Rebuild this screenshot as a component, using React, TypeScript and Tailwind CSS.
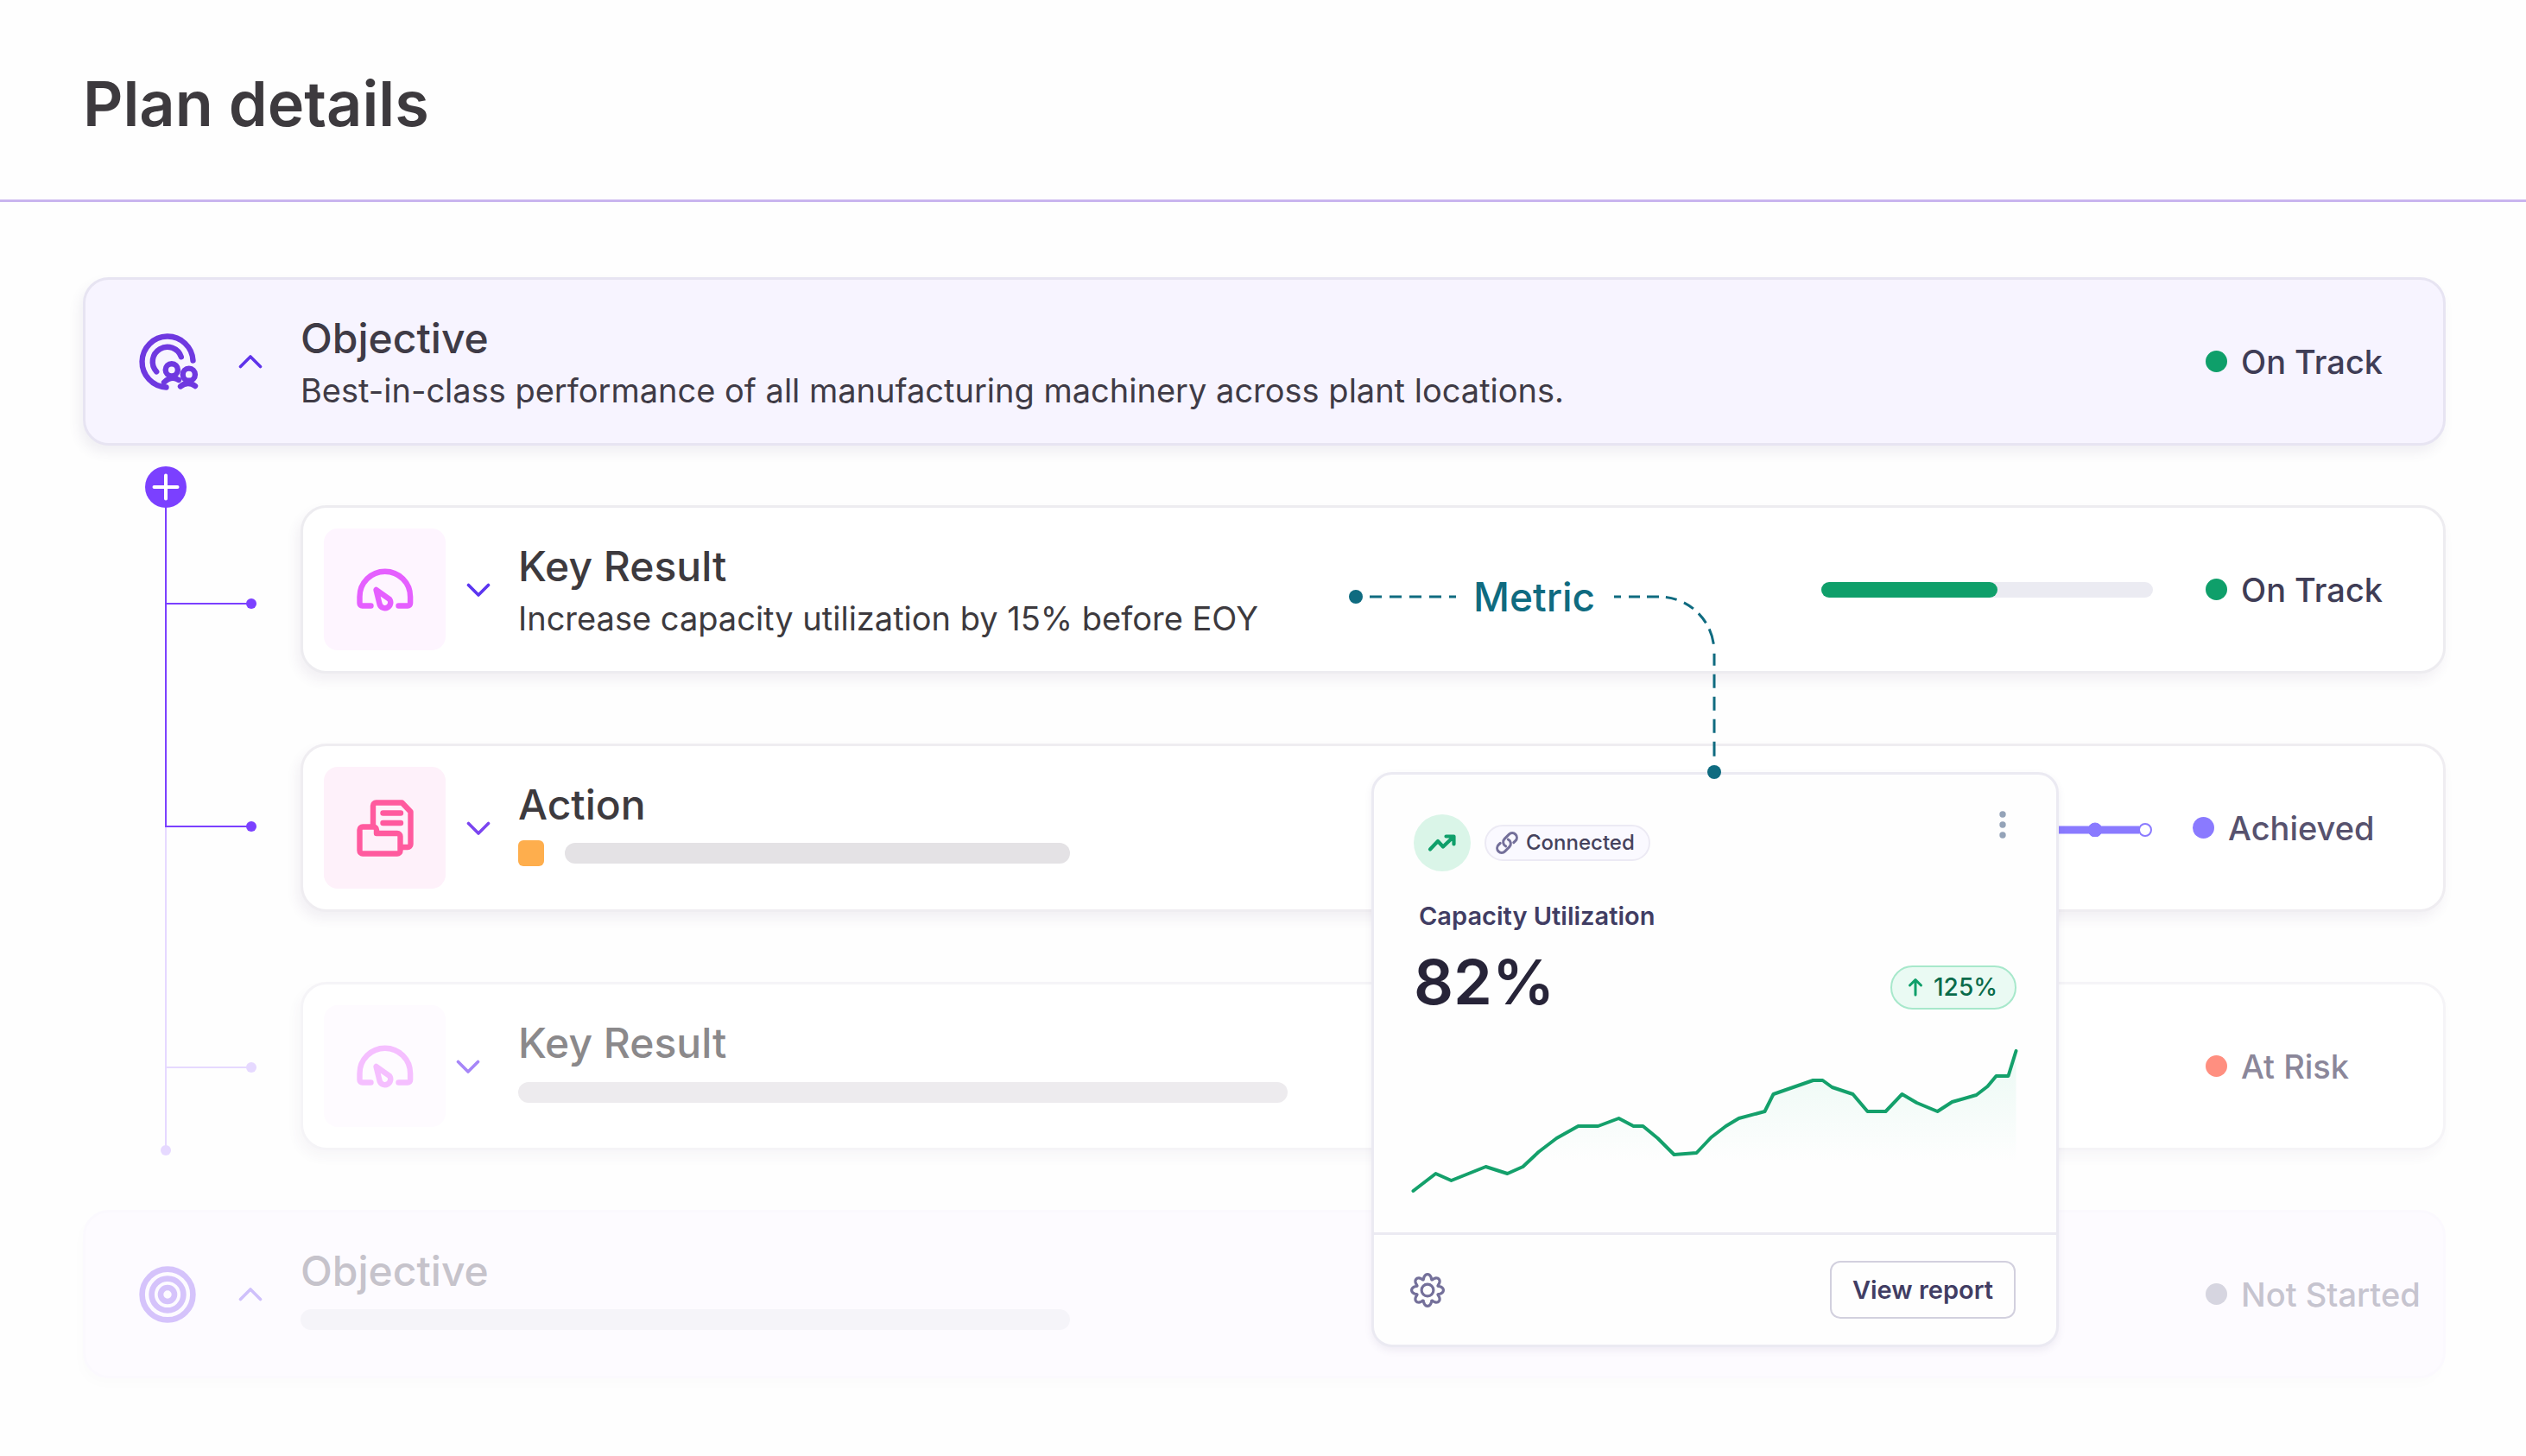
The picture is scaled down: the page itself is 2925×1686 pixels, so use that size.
import type { ReactNode } from "react";

type Shade = { stroke: string };

function ObjectiveIcon({ stroke }: Shade) {
  return (
    <svg viewBox="0 0 78 78" className="size-[78px]" fill="none" stroke={stroke} strokeWidth="6.4" strokeLinecap="round" aria-hidden="true">
      <path d="M37.5 68.5A29.5 29.5 0 1 1 68.5 37.5" />
      <path d="M26.2 50.3A17 17 0 1 1 54.8 33.3" />
      <circle cx="43.8" cy="48.3" r="7.1" />
      <path d="M35 62.7Q43.5 54.5 52 60" />
      <circle cx="63.8" cy="53.7" r="7.1" />
      <path d="M54 67.4Q62.5 60.5 71 67" />
    </svg>
  );
}

function TargetIcon({ stroke }: Shade) {
  return (
    <svg viewBox="0 0 78 78" className="size-[78px]" fill="none" stroke={stroke} strokeWidth="6.6" aria-hidden="true">
      <circle cx="39" cy="39" r="29.4" />
      <circle cx="39" cy="39" r="18.4" />
      <circle cx="39" cy="39" r="8" />
    </svg>
  );
}

function GaugeIcon({ stroke }: Shade) {
  return (
    <svg viewBox="0 0 78 78" className="size-[78px]" fill="none" stroke={stroke} strokeWidth="6.4" strokeLinecap="round" strokeLinejoin="round" aria-hidden="true">
      <path d="M22.5 57.5H12.5a3 3 0 0 1-3-3V47a29.3 29.3 0 0 1 58.6 0v7.5a3 3 0 0 1-3 3H54.5" />
      <path d="M28.5 39L32.7 56A6.5 6.5 0 1 0 44 49.8Z" />
    </svg>
  );
}

function ActionIcon({ stroke }: Shade) {
  return (
    <svg viewBox="0 0 78 78" className="size-[78px]" fill="none" stroke={stroke} strokeWidth="6.4" strokeLinecap="round" strokeLinejoin="round" aria-hidden="true">
      <path d="M25 36V13a3.5 3.5 0 0 1 3.5-3.5H58.5L68.5 20V57.5a3.5 3.5 0 0 1-3.5 3.5H59" />
      <path d="M36.5 21.5H57M36.5 33H57" />
      <path d="M13 37.5H25.5a3.5 3.5 0 0 1 3.5 3.5V45H53a3.5 3.5 0 0 1 3.5 3.5V65a3.5 3.5 0 0 1-3.5 3.5H13a3.5 3.5 0 0 1-3.5-3.5V41a3.5 3.5 0 0 1 3.5-3.5Z" />
    </svg>
  );
}

// Outline of an eight-lobed cog around the centre of a 42 unit box.
const cogPoints = Array.from({ length: 160 }, (_, i) => {
  const t = (i / 160) * Math.PI * 2;
  const radius = 15.7 + 2.7 * Math.cos(8 * t);
  const angle = t + 0.06 * Math.sin(8 * t);
  return `${(21 + radius * Math.sin(angle)).toFixed(2)},${(21 - radius * Math.cos(angle)).toFixed(2)}`;
}).join(" ");

function GearIcon() {
  return (
    <svg viewBox="0 0 42 42" className="size-[42px]" fill="none" stroke="#74709a" strokeWidth="3.2" strokeLinejoin="round" aria-hidden="true">
      <polygon points={cogPoints} />
      <circle cx="21" cy="21" r="6.9" />
    </svg>
  );
}

function Chevron({ up, stroke }: { up?: boolean; stroke: string }) {
  return (
    <svg viewBox="0 0 28 16" className="h-4 w-7" fill="none" stroke={stroke} strokeWidth="3.6" strokeLinecap="round" strokeLinejoin="round" aria-hidden="true">
      <path d={up ? "M2.5 13.5L14 2L25.5 13.5" : "M2.5 2.5L14 14L25.5 2.5"} />
    </svg>
  );
}

function Status({ label, dot, text, width }: { label: string; dot: string; text: string; width: string }) {
  return (
    <div className={`flex shrink-0 items-center gap-4 ${width}`}>
      <span className={`size-[25px] shrink-0 rounded-full ${dot}`} />
      <span className={`text-[38px] leading-[48px] font-medium whitespace-nowrap ${text}`}>{label}</span>
    </div>
  );
}

type RowProps = {
  title: string;
  titleColor: string;
  frame: string;
  tile?: string;
  icon: ReactNode;
  chevron: ReactNode;
  expanded?: boolean;
  chevronInset: string;
  children: ReactNode;
  aside: ReactNode;
};

function Row({ title, titleColor, frame, tile = "", icon, chevron, expanded = false, chevronInset, children, aside }: RowProps) {
  return (
    <article className={`flex h-[195px] items-center rounded-[30px] border-[3px] pl-6 ${frame}`}>
      <div className={`flex size-[141px] shrink-0 items-center justify-center rounded-2xl ${tile}`}>{icon}</div>
      <button type="button" aria-label={`Toggle ${title}`} aria-expanded={expanded} className={`flex h-16 w-[84px] shrink-0 items-center ${chevronInset}`}>
        {chevron}
      </button>
      <div className="min-w-0 flex-1 self-start pt-[38px]">
        <h2 className={`text-5xl leading-[60px] font-medium ${titleColor}`}>{title}</h2>
        {children}
      </div>
      {aside}
    </article>
  );
}

function Bar({ className }: { className: string }) {
  return <span className={`h-6 rounded-full ${className}`} />;
}

function Tree() {
  return (
    <svg viewBox="-1 0 252 885" className="h-[885px] w-[252px] shrink-0" fill="none" aria-hidden="true">
      <g stroke="#e6d9ff" strokeWidth="2">
        <path d="M95 441V816M95 720H194" />
      </g>
      <g fill="#e6d9ff">
        <circle cx="95" cy="816" r="6" />
        <circle cx="194" cy="720" r="6" />
      </g>
      <g stroke="#7b40ff" strokeWidth="2">
        <path d="M95 60V441H194M95 183H194" />
      </g>
      <g fill="#7b40ff">
        <circle cx="194" cy="183" r="6" />
        <circle cx="194" cy="441" r="6" />
        <circle cx="95" cy="48" r="24" />
      </g>
      <path d="M95 34.5V61.5M81.5 48H108.5" stroke="#fff" strokeWidth="4" strokeLinecap="round" />
    </svg>
  );
}

function MetricConnector() {
  return (
    <div className="absolute top-[449px] right-[930px] h-[219px] w-[435px]">
      <svg viewBox="0 0 435 219" className="size-full" fill="none" stroke="#0f6b80" strokeWidth="3" aria-hidden="true">
        <path d="M26 8H126" strokeDasharray="14 9" />
        <path d="M309 8H361A64 64 0 0 1 425 72V194" strokeDasharray="8 9 13 8 14 8 13 9 13 8 14 8 18 11 14 10 16 10 16 10 16 10 17 90" />
        <circle cx="10" cy="8" r="8" fill="#0f6b80" stroke="none" />
        <circle cx="425" cy="211" r="8" fill="#0f6b80" stroke="none" />
      </svg>
      <span className="absolute -top-5 left-[146px] text-[46px] leading-[56px] font-medium text-[#0f6b80]">Metric</span>
    </div>
  );
}

const trend: [number, number][] = [
  [0, 162], [26, 142], [44, 150], [84, 134], [109, 142], [127, 134], [145, 117], [166, 101], [191, 87], [214, 87],
  [238, 78], [255, 87], [266, 87], [283, 101], [302, 120], [328, 118], [345, 100], [362, 87], [377, 78], [407, 70],
  [417, 50], [440, 42], [463, 34], [474, 34], [485, 42], [509, 50], [526, 70], [547, 70], [566, 50], [583, 60],
  [607, 70], [624, 59], [652, 51], [665, 41], [675, 29], [689, 29], [698, 0],
];

function TrendChart() {
  const points = trend.map((p) => p.join(",")).join(" ");
  return (
    <svg viewBox="0 0 698 162" className="block h-[162px] w-full overflow-visible" fill="none" role="img" aria-label="Capacity utilization trend">
      <defs>
        <linearGradient id="trend-fill" x1="0" y1="0" x2="0" y2="1">
          <stop offset="0" stopColor="#10c080" stopOpacity="0.08" />
          <stop offset="0.8" stopColor="#10c080" stopOpacity="0" />
        </linearGradient>
      </defs>
      <polygon points={`0,162 ${points} 698,162`} fill="url(#trend-fill)" />
      <polyline points={points} stroke="#14a06b" strokeWidth="4" strokeLinecap="round" strokeLinejoin="round" />
    </svg>
  );
}

function MetricCard() {
  return (
    <aside className="absolute top-[660px] right-[541px] w-[796px] rounded-[24px] border-[3px] border-[#ebeaf2] bg-[#fefefe] shadow-[0_4px_8px_rgba(80,60,120,0.08)]">
      <div className="px-[46px] pt-[46px] pb-12">
        <div className="flex items-center">
          <span className="flex size-[66px] items-center justify-center rounded-full bg-[#daf5e8]">
            <svg viewBox="0 0 34 22" className="h-[22px] w-[34px]" fill="none" stroke="#0f9f6a" strokeWidth="4.2" strokeLinecap="round" strokeLinejoin="round" aria-hidden="true">
              <path d="M3 18.5L12 9L18 15.5L29.5 4.5M21.5 3.5H30.5V12.5" />
            </svg>
          </span>
          <span className="ml-4 flex h-[42px] items-center gap-2 rounded-full border-2 border-[#eceaf4] bg-[#faf9ff] pr-4 pl-[10px] text-2xl leading-8 font-medium text-[#45425c]">
            <svg viewBox="0 0 24 24" className="size-7" fill="none" stroke="#74709a" strokeWidth="2.6" strokeLinecap="round" strokeLinejoin="round" aria-hidden="true">
              <path d="M13.19 8.688a4.5 4.5 0 0 1 1.242 7.244l-4.5 4.5a4.5 4.5 0 0 1-6.364-6.364l1.757-1.757m13.35-.622 1.757-1.757a4.5 4.5 0 0 0-6.364-6.364l-4.5 4.5a4.5 4.5 0 0 0 1.242 7.244" />
            </svg>
            Connected
          </span>
          <button type="button" aria-label="More options" className="ml-auto flex h-14 w-8 items-start justify-center self-start">
            <svg viewBox="0 4 8 32" className="h-8 w-2 overflow-visible" fill="#94a3b8" aria-hidden="true">
              <circle cx="4" cy="4" r="3.7" />
              <circle cx="4" cy="16" r="3.7" />
              <circle cx="4" cy="28" r="3.7" />
            </svg>
          </button>
        </div>
        <h3 className="mt-8 pl-[6px] text-[29px] leading-10 font-semibold text-[#413d63]">Capacity Utilization</h3>
        <div className="mt-2 flex items-center justify-between">
          <p className="text-7xl leading-[96px] font-semibold text-[#272438]">82%</p>
          <span className="mt-3 flex h-[51px] items-center gap-3 rounded-full border-2 border-[#a7e8cb] bg-[#eafaf3] pr-5 pl-[18px] text-[28px] leading-8 font-medium text-[#0a6b4b]">
            <svg viewBox="0 0 18 22" className="h-[22px] w-[18px]" fill="none" stroke="#0f9f6a" strokeWidth="3" strokeLinecap="round" strokeLinejoin="round" aria-hidden="true">
              <path d="M9 20V2.5M2.5 9L9 2.5L15.5 9" />
            </svg>
            125%
          </span>
        </div>
        <div className="mt-8 -ml-px">
          <TrendChart />
        </div>
      </div>
      <div className="flex h-[130px] items-center justify-between border-t-[3px] border-[#ebeaf2] pr-[47px] pl-[41px]">
        <button type="button" aria-label="Settings">
          <GearIcon />
        </button>
        <button type="button" className="h-[67px] rounded-xl border-2 border-[#d2d0de] px-6 text-[29px] leading-8 font-semibold text-[#413d63]">
          View report
        </button>
      </div>
    </aside>
  );
}

const childShadow = "shadow-[-4px_8px_14px_rgba(80,60,110,0.07)]";

export default function App() {
  return (
    <main className="min-h-screen overflow-x-hidden bg-[#fefefe] font-['Inter','Liberation_Sans',sans-serif]">
      <header className="flex h-[234px] items-center border-b-[3px] border-[#c9b5ef] pt-2 pl-24">
        <h1 className="text-7xl leading-[80px] font-semibold text-[#3d3a3e]">Plan details</h1>
      </header>
      <section className="relative pt-[87px] pr-[93px] pl-24">
        <Row
          title="Objective"
          titleColor="text-[#3f3b46]"
          frame="border-[#e7e4f2] bg-[#f7f4ff] shadow-[-4px_8px_14px_rgba(80,60,110,0.08)]"
          icon={<ObjectiveIcon stroke="#6f38e0" />}
          chevron={<Chevron up stroke="#5f33ea" />}
          expanded
          chevronInset="pl-3"
          aside={<Status label="On Track" dot="bg-[#0f9f6a]" text="text-[#3f3d56]" width="w-[275px]" />}
        >
          <p className="text-[38px] leading-[60px] whitespace-nowrap text-[#3f3b46]">
            Best-in-class performance of all manufacturing machinery across plant locations.
          </p>
        </Row>

        <div className="flex">
          <Tree />
          <div className="flex min-w-0 flex-1 flex-col gap-[81px] py-[69px]">
            <Row
              title="Key Result"
              titleColor="text-[#3d3a3e]"
              frame={`border-[#edecf0] bg-white ${childShadow}`}
              tile="bg-[#fef5ff]"
              icon={<GaugeIcon stroke="#e55fff" />}
              chevron={<Chevron stroke="#5b35f0" />}
              chevronInset="pl-6"
              aside={
                <>
                  <div role="progressbar" aria-label="Key result progress" aria-valuenow={53} className="mr-[61px] h-[18px] w-[384px] shrink-0 rounded-full bg-[#ebebf2]">
                    <div className="h-full w-[53%] rounded-full bg-[#0f9f6a]" />
                  </div>
                  <Status label="On Track" dot="bg-[#0f9f6a]" text="text-[#3f3d56]" width="w-[275px]" />
                </>
              }
            >
              <p className="text-[38px] leading-[60px] whitespace-nowrap text-[#3d3a3e]">Increase capacity utilization by 15% before EOY</p>
            </Row>

            <Row
              title="Action"
              titleColor="text-[#3d3a3e]"
              frame={`border-[#efedf1] bg-white ${childShadow}`}
              tile="bg-[#fef1fa]"
              icon={<ActionIcon stroke="#ff5a9e" />}
              chevron={<Chevron stroke="#7b45f0" />}
              chevronInset="pl-6"
              aside={
                <>
                  <svg viewBox="0 0 384 20" className="mr-[46px] h-5 w-[384px] shrink-0" aria-hidden="true">
                    <path d="M0 12H368" stroke="#8a7aff" strokeWidth="9" />
                    <circle cx="317" cy="12" r="8" fill="#8a7aff" stroke="#8a7aff" />
                    <circle cx="375" cy="12" r="7" fill="#fff" stroke="#8a7aff" strokeWidth="2" />
                  </svg>
                  <Status label="Achieved" dot="bg-[#8a7aff]" text="text-[#57526e]" width="w-[290px]" />
                </>
              }
            >
              <div className="flex h-[52px] items-center gap-6">
                <span className="size-[30px] rounded-[6px] bg-[#feae4d]" />
                <Bar className="w-[585px] bg-[#e4e2e5]" />
              </div>
            </Row>

            <Row
              title="Key Result"
              titleColor="text-[#8b898b]"
              frame="border-[#f5f4f7] bg-white shadow-[-4px_8px_14px_rgba(80,60,110,0.04)]"
              tile="bg-[#fefbff]"
              icon={<GaugeIcon stroke="#f5bfff" />}
              chevron={<Chevron stroke="#a686f8" />}
              chevronInset="pl-3"
              aside={<Status label="At Risk" dot="bg-[#ff8f80]" text="text-[#8b879a]" width="w-[275px]" />}
            >
              <div className="flex h-[54px] items-center">
                <Bar className="w-[891px] bg-[#edebee]" />
              </div>
            </Row>
          </div>
        </div>

        <Row
          title="Objective"
          titleColor="text-[#c6c3cb]"
          frame="border-[#fbf9fe] bg-[#fdfbff] shadow-[-4px_8px_14px_rgba(80,60,110,0.01)]"
          icon={<TargetIcon stroke="#d5c3fb" />}
          chevron={<Chevron up stroke="#cfc0fb" />}
          chevronInset="pl-3"
          aside={<Status label="Not Started" dot="bg-[#d6d5e0]" text="text-[#c6c4cf]" width="w-[275px]" />}
        >
          <div className="flex h-[52px] items-center">
            <Bar className="w-[891px] bg-[#f5f4f9]" />
          </div>
        </Row>

        <MetricCard />
        <MetricConnector />
      </section>
    </main>
  );
}
